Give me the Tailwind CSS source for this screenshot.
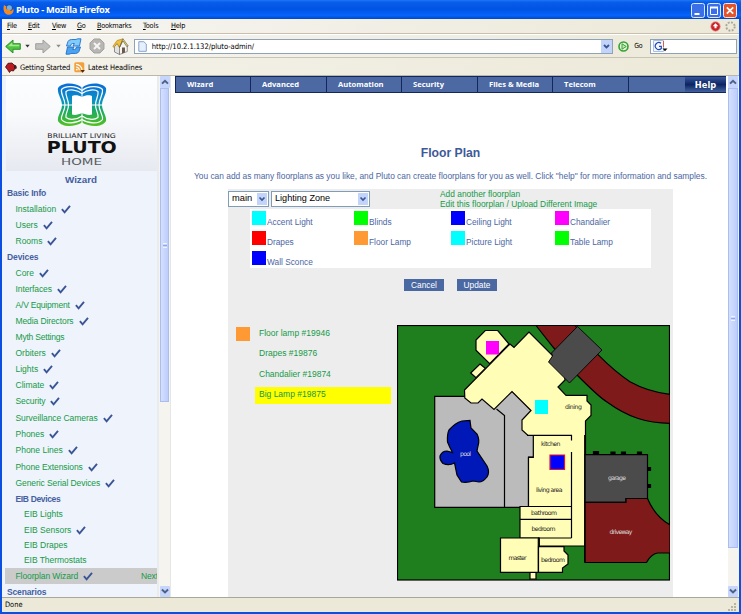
<!DOCTYPE html>
<html lang="en">
<head>
<meta charset="utf-8">
<title>Pluto - Mozilla Firefox</title>
<script src="https://cdn.jsdelivr.net/npm/@tailwindcss/browser@4"></script>
</head>
<body class="w-[741px] h-[614px] overflow-hidden">
<svg width="0" height="0" class="absolute">
  <defs>
    <symbol id="ck" viewBox="0 0 10 9"><path d="M.9 4.200 3.600 7.300 9 .9" fill="none" stroke="#3a5596" stroke-width="1.900"/></symbol>
    <symbol id="up" viewBox="0 0 8 8"><path d="M1.500 5.400 4 3l2.500 2.400" fill="none" stroke="#4d6185" stroke-width="1.600"/></symbol>
    <symbol id="dn" viewBox="0 0 8 8"><path d="M1.500 2.800 4 5.200l2.500-2.400" fill="none" stroke="#4d6185" stroke-width="1.600"/></symbol>
  </defs>
</svg>
<div class="flex flex-col w-[741px] h-[614px] bg-[#0a4fe0] font-['Liberation_Sans',sans-serif]">
  <!-- Title bar -->
  <header class="flex items-center h-[19px] pl-[3px] pr-[4px] bg-[linear-gradient(#1c78f5_0%,#0a5cea_12%,#0054e3_50%,#0563fb_82%,#0048c8_100%)]">
    <svg class="w-[11px] h-[11px]" viewBox="0 0 11 11"><circle cx="5.800" cy="5.200" r="4.600" fill="#274f9c"/><circle cx="6.300" cy="3.800" r="2.600" fill="#6fb1e8"/><path d="M1 1c1 1 1.500 1 2.500 1C2.500 3.500 3 5 4.500 5.500c1 .5 2 0 3 .5-1 1.500 1 1.500 2.800-1.500C11.500 9 8 11 5 10.700 1.500 10.400-.5 6 1 1z" fill="#f08a24"/></svg>
    <h1 class="ml-[2px] text-[9.3px] font-bold text-white leading-none font-['Open_Sans','DejaVu_Sans',sans-serif] tracking-[-0.3px] whitespace-nowrap pt-[1px]">Pluto - Mozilla Firefox</h1>
    <div class="ml-auto flex gap-[2px] mt-[1px]">
      <svg class="w-[14px] h-[15px]" viewBox="0 0 14 15"><rect x=".5" y=".5" width="13" height="14" rx="2" fill="#3a6fe8" stroke="#dce8ff"/><path d="M3.500 11h5" stroke="#fff" stroke-width="2"/></svg>
      <svg class="w-[14px] h-[15px]" viewBox="0 0 14 15"><rect x=".5" y=".5" width="13" height="14" rx="2" fill="#3a6fe8" stroke="#dce8ff"/><path d="M3.500 4.500h7v7h-7z" fill="none" stroke="#fff"/><path d="M3 4.500h8" stroke="#fff" stroke-width="2"/></svg>
      <svg class="w-[14px] h-[15px]" viewBox="0 0 14 15"><rect x=".5" y=".5" width="13" height="14" rx="2" fill="#e2542c" stroke="#ffe4dc"/><path d="M3.800 4.300l6.400 6.400m0-6.400l-6.400 6.400" stroke="#fff" stroke-width="1.700"/></svg>
    </div>
  </header>

  <div class="flex flex-col mx-[2px] h-[593px] bg-[#ece9d8]">
    <!-- Menus -->
    <nav class="flex items-center h-[15px] pl-[5px] pr-[3px] shrink-0 text-[7.3px] leading-none text-black font-['DejaVu_Sans_Condensed','DejaVu_Sans',sans-serif] bg-[linear-gradient(90deg,#f6f5f2,#ece9d8)] border-b border-[#c9bfae]">
      <span class="w-[21px] tracking-[-0.3px]"><u>F</u>ile</span><span class="w-[24px] tracking-[-0.3px]"><u>E</u>dit</span><span class="w-[25px] tracking-[-0.4px]"><u>V</u>iew</span><span class="w-[20px] tracking-[-0.4px]"><u>G</u>o</span><span class="w-[46px] tracking-[-0.25px]"><u>B</u>ookmarks</span><span class="w-[28px] tracking-[-0.1px]"><u>T</u>ools</span><span class="tracking-[-0.2px]"><u>H</u>elp</span>
      <div class="ml-auto flex gap-[4px]">
        <svg class="w-[11px] h-[11px]" viewBox="0 0 11 11"><circle cx="5.500" cy="5.500" r="4.700" fill="#c8252b" stroke="#e98b8b" stroke-width=".7"/><path d="M5.500 2.200 8.300 5.200H6.500v2h-2v-2H2.700z" fill="#fff"/></svg>
        <svg class="w-[11px] h-[11px]" viewBox="0 0 11 11"><circle cx="5.500" cy="5.500" r="4.200" fill="none" stroke="#aaa79d" stroke-width="1.900" stroke-dasharray="1.900 1.400"/></svg>
      </div>
    </nav>
    <!-- Navigation toolbar -->
    <div class="flex items-center h-[24px] shrink-0 pl-[3px] pr-[2px] border-t border-white border-b border-b-[#c6c4b4] bg-[linear-gradient(90deg,#f6f5f2,#ece9d8)]">
      <svg class="w-[16px] h-[15px]" viewBox="0 0 16 15"><path d="M.7 7.500 8 1v3.700h7.300v5.600H8V14z" fill="#4fc63f" stroke="#2b8f2c"/><path d="M3 7.200 7.300 3.500v2.200h7v1.500z" fill="#a5ea92"/></svg>
      <svg class="w-[5px] h-[4px] ml-[4px]" viewBox="0 0 5 4"><path d="M.3.800h4.400L2.500 3.500z" fill="#333"/></svg>
      <svg class="w-[16px] h-[15px] ml-[5px]" viewBox="0 0 16 15"><path d="M15.300 7.500 8 1v3.700H.7v5.600H8V14z" fill="#bfbfbd" stroke="#a09f9b"/></svg>
      <svg class="w-[5px] h-[4px] ml-[5px]" viewBox="0 0 5 4"><path d="M.3.800h4.400L2.500 3.500z" fill="#8c8b85"/></svg>
      <svg class="w-[17px] h-[17px] ml-[4px]" viewBox="0 0 17 17"><path d="M1.500 8 3 3.500Q4 1.500 6.500 1.500H11L12.500.8H16L14.500 8H8l1.300-2.500H7.500Q6 5.500 5.500 8z" fill="#7fcbfa" stroke="#1f6fcb" stroke-width=".9"/><path d="M15.500 9 14 13.500Q13 15.500 10.500 15.500H6l-1.500.7H1L2.500 9H9l-1.300 2.500h1.800Q11 11.500 11.500 9z" fill="#4ba3f0" stroke="#1f6fcb" stroke-width=".9"/></svg>
      <svg class="w-[16px] h-[16px] ml-[7px]" viewBox="0 0 16 16"><path d="M5 1h6l4 4v6l-4 4H5l-4-4V5z" fill="#b7b6b3" stroke="#a3a29e"/><path d="M5 5l6 6m0-6l-6 6" stroke="#f5f5f3" stroke-width="2"/></svg>
      <svg class="w-[17px] h-[17px] ml-[7px]" viewBox="0 0 17 17"><path d="M6 9 11 2.500l4.300 5.500v5.500L7.500 16.500z" fill="#f7f6f3" stroke="#666" stroke-width=".7"/><path d="M2.500 8.500V14l5 2.500V9L5 5.500z" fill="#e3e2de" stroke="#666" stroke-width=".7"/><path d="M.8 8.500 5 2.500 11 .8 7.500 9.500 5 5.500 2 9.300z" fill="#efc13c" stroke="#a67c16" stroke-width=".6"/><path d="M11 .8 16.300 8l-1.500.6L11 3 7.500 9.500z" fill="#f7d562" stroke="#555" stroke-width=".6"/><path d="M10 9.500h3v5l-3 1.100z" fill="#6b5a4c"/></svg>
      <div class="ml-[5px] flex items-center w-[480px] h-[15px] border border-[#8fa3b8] bg-white pl-[3px]">
        <svg class="w-[9px] h-[11px]" viewBox="0 0 9 11"><path d="M.8.700h5L8.300 3v7.300H.8z" fill="#e6effc" stroke="#7b9acb" stroke-width=".9"/></svg>
        <span class="ml-[5px] text-[7.600px] leading-none text-black font-['DejaVu_Sans_Condensed','DejaVu_Sans',sans-serif] tracking-[-0.06px] pt-[1px]">http://10.2.1.132/pluto-admin/</span>
        <svg class="ml-auto w-[11px] h-[13px] bg-[#c3d4fb]" viewBox="0 0 11 13"><path d="M3 5l2.500 2.500L8 5" fill="none" stroke="#3d5690" stroke-width="1.800"/></svg>
      </div>
      <svg class="ml-[5px] w-[11px] h-[11px]" viewBox="0 0 11 11"><circle cx="5.500" cy="5.500" r="4.500" fill="#e7f7e3" stroke="#35a22f" stroke-width="1.600"/><path d="M4 2.800 8.300 5.500 4 8.200z" fill="#bfeab6" stroke="#35a22f"/></svg>
      <span class="ml-[5px] w-[16px] text-[7px] leading-none font-['DejaVu_Sans_Condensed','DejaVu_Sans',sans-serif] tracking-[-0.2px] pt-[1px]">Go</span>
      <div class="flex items-center w-[87px] h-[15px] border border-[#8fa3b8] bg-white pl-[2px]">
        <svg class="w-[15px] h-[12px]" viewBox="0 0 15 12"><path d="M.5.500h10v11H.5z" fill="#f4f8fe" stroke="#a9c0e4"/><path d="M8 3.300A3.500 3.500 0 1 0 8.300 8.500V6.300H6" fill="none" stroke="#2449b0" stroke-width="1.200"/><path d="M10.500 1v6" stroke="#df5b4d"/><path d="M9.500 8.500h5L12 11.300z" fill="#111"/></svg>
      </div>
    </div>
    <!-- Bookmarks toolbar -->
    <div class="flex items-center h-[18px] pt-[2px] shrink-0 pl-[3px] text-[7.500px] leading-none text-black font-['DejaVu_Sans_Condensed','DejaVu_Sans',sans-serif] bg-[linear-gradient(90deg,#f4f2ea,#ece9d8)] border-b border-[#bab8aa]">
      <svg class="w-[12px] h-[11px]" viewBox="0 0 12 11"><path d="M.5 5 3 1.300 7 1l2 2 2 .8.300 2.500-2 1L8.500 9 6 8.500 4.500 10.500 2.500 7.500z" fill="#b81c22" stroke="#3c0b0c" stroke-width=".8"/><path d="M9 3l2 2-2 2" fill="#222"/></svg>
      <span class="ml-[3px] tracking-[-0.14px] w-[54px] whitespace-nowrap">Getting Started</span>
      <svg class="w-[11px] h-[11px]" viewBox="0 0 11 11"><rect x=".3" y=".3" width="10" height="10" rx="1.500" fill="#f2a13c"/><path d="M2 2.300a6 6 0 0 1 6 6M2 5a3.300 3.300 0 0 1 3.300 3.300" stroke="#fff" stroke-width="1.200" fill="none"/><circle cx="2.800" cy="7.600" r=".9" fill="#fff"/><path d="M6.500 8h4.300L8.600 10.700z" fill="#4c2c0c"/></svg>
      <span class="ml-[3px] tracking-[-0.14px]">Latest Headlines</span>
    </div>

    <!-- Page frames -->
    <div class="flex h-[521px] shrink-0 bg-white overflow-hidden">
      <aside class="w-[157px] h-[521px] bg-[#eff3fb] border-r-2 border-[#e9ecee] pl-[3px] shrink-0 overflow-hidden text-[8.500px] leading-none text-[#149a48]">
        <div class="h-[95px] w-[151px] ml-[1px] bg-[linear-gradient(#fcfdfe_0%,#f9fafc_40%,#e6e9f0_100%)] flex flex-col items-center pt-[7px]">
          <svg class="w-[50px] h-[44px]" viewBox="0 0 50 44">
            <defs><linearGradient id="lg" x1="0" y1="0" x2="0" y2="44" gradientUnits="userSpaceOnUse"><stop offset="0" stop-color="#0a6ad8"/><stop offset=".42" stop-color="#0a94c4"/><stop offset=".6" stop-color="#18a96a"/><stop offset="1" stop-color="#58c21c"/></linearGradient></defs>
            <path d="M25 4.500C18-1 5-1 1 5c-1 6 4 11 4 17S0 33 1 38c4 7 17 6 24 1.500C32 44 45 45 49 38c1-5-4-10-4-16s5-11 4-17C45-1 32-1 25 4.500z" fill="url(#lg)"/>
            <path d="M25 7.500C19 2.500 8 2.500 4.500 6.500c-1 5 3.500 9 3.500 15.500s-4.500 10-3.500 14.500c3.500 5 14.500 4 20.500 0 6 4 17 5 20.500 0C46.500 32 42 28.500 42 22s4.500-10.500 3.500-15.500C42 2.500 31 2.500 25 7.500z" fill="none" stroke="#fff" stroke-width="1.200"/>
            <path d="M25 10.500c-5-4-13-4.500-16-2-1 4 2.500 7.500 2.500 13.500S8 30.500 9 34.500c4 3 11 2 16-1.500 5 3.500 12 4.500 16 1.500 1-4-2.500-6.500-2.500-12.500S42 12.500 41 8.500c-3-2.500-11-2-16 2z" fill="none" stroke="#fff" stroke-width="1.200"/>
            <path d="M25 14c-3-2-8-2.500-10-1 0 3 0 5 0 9s0 6.500 0 9.500c3 1 7 0 10-1.500 3 1.500 7 2.500 10 1.500 0-3 0-5.500 0-9.500s0-6 0-9c-2-1.500-7-1-10 1z" fill="#fff"/>
            <path d="M25 3v12M25 29v12M2 22h16M32 22h16" stroke="#fff" stroke-width="1"/>
          </svg>
          <svg class="w-[80px] h-[38px] mt-[2px]" viewBox="0 0 80 38" font-family="'DejaVu Sans',sans-serif">
            <text x="5.300" y="8.500" font-size="6.400" fill="#222" textLength="68.500" lengthAdjust="spacingAndGlyphs">BRILLIANT LIVING</text>
            <text x="4.800" y="24.300" font-size="15" font-weight="bold" fill="#111" textLength="70" lengthAdjust="spacingAndGlyphs">PLUTO</text>
            <text x="19" y="36" font-size="9.300" fill="#585c63" textLength="41" lengthAdjust="spacingAndGlyphs">HOME</text>
          </svg>
        </div>
        <h2 class="h-[16px] flex items-center justify-center pt-[2px] text-[9.800px] font-bold text-[#4560a0]">Wizard</h2>
        <div class="h-[14px] pt-[2px] pl-[2px] font-bold text-[#4560a0] tracking-[-0.15px]">Basic Info</div>
        <ul class="[&>li]:flex [&>li]:items-center [&>li]:gap-[5px] [&>li]:whitespace-nowrap">
          <li class="h-[16px] pl-[10.500px]">Installation<svg class="w-[10px] h-[9px]"><use href="#ck"/></svg></li>
          <li class="h-[16px] pl-[10.500px]">Users<svg class="w-[10px] h-[9px]"><use href="#ck"/></svg></li>
          <li class="h-[16px] pl-[10.500px]">Rooms<svg class="w-[10px] h-[9px]"><use href="#ck"/></svg></li>
          <li class="h-[16px] pl-[2px] font-bold text-[#4560a0] tracking-[-0.1px]">Devices</li>
          <li class="h-[16px] pl-[10.500px]">Core<svg class="w-[10px] h-[9px]"><use href="#ck"/></svg></li>
          <li class="h-[16px] pl-[10.500px] tracking-[-0.1px]">Interfaces<svg class="w-[10px] h-[9px]"><use href="#ck"/></svg></li>
          <li class="h-[16px] pl-[10.500px] tracking-[-0.2px]">A/V Equipment<svg class="w-[10px] h-[9px]"><use href="#ck"/></svg></li>
          <li class="h-[17px] pl-[10.500px] tracking-[-0.1px]">Media Directors<svg class="w-[10px] h-[9px]"><use href="#ck"/></svg></li>
          <li class="h-[15px] pl-[10.500px] tracking-[-0.2px]">Myth Settings</li>
          <li class="h-[16px] pl-[10.500px]">Orbiters<svg class="w-[10px] h-[9px]"><use href="#ck"/></svg></li>
          <li class="h-[16px] pl-[10.500px]">Lights<svg class="w-[10px] h-[9px]"><use href="#ck"/></svg></li>
          <li class="h-[16px] pl-[10.500px]">Climate<svg class="w-[10px] h-[9px]"><use href="#ck"/></svg></li>
          <li class="h-[17px] pl-[10.500px] tracking-[-0.1px]">Security<svg class="w-[10px] h-[9px]"><use href="#ck"/></svg></li>
          <li class="h-[16px] pl-[10.500px] tracking-[-0.05px]">Surveillance Cameras<svg class="w-[10px] h-[9px]"><use href="#ck"/></svg></li>
          <li class="h-[16px] pl-[10.500px]">Phones<svg class="w-[10px] h-[9px]"><use href="#ck"/></svg></li>
          <li class="h-[17px] pl-[10.500px]">Phone Lines<svg class="w-[10px] h-[9px]"><use href="#ck"/></svg></li>
          <li class="h-[16px] pl-[10.500px] tracking-[-0.08px]">Phone Extensions<svg class="w-[10px] h-[9px]"><use href="#ck"/></svg></li>
          <li class="h-[16px] pl-[10.500px] tracking-[-0.08px]">Generic Serial Devices<svg class="w-[10px] h-[9px]"><use href="#ck"/></svg></li>
          <li class="h-[16px] pl-[10.500px] font-bold text-[#4560a0] tracking-[-0.35px]">EIB Devices</li>
          <li class="h-[15px] pl-[19px]">EIB Lights</li>
          <li class="h-[16px] pl-[19px]">EIB Sensors<svg class="w-[10px] h-[9px]"><use href="#ck"/></svg></li>
          <li class="h-[15px] pl-[19px]">EIB Drapes</li>
          <li class="h-[15px] pl-[19px] tracking-[-0.05px]">EIB Thermostats</li>
          <li class="h-[16px] pl-[10.500px] bg-[#cbcbcb] tracking-[-0.1px]">Floorplan Wizard<svg class="w-[10px] h-[9px]"><use href="#ck"/></svg><span class="ml-auto -mr-[1px]">Next</span></li>
          <li class="h-[16px] pl-[2px] font-bold text-[#4560a0] tracking-[-0.15px]">Scenarios</li>
        </ul>
      </aside>
      <div class="flex flex-col w-[12px] h-[521px] shrink-0 px-[1px] bg-[#f5f4ef] border-r border-[#e6e6e6]">
        <svg class="w-[10px] h-[12px] bg-[#c6d5fc] rounded-[1px]" viewBox="0 0 8 10"><use href="#up" width="8" height="8" y="1"/></svg>
        <div class="h-[314px] border border-[#a9bdf0] bg-[linear-gradient(90deg,#d5e0fe,#bdcdfb)] flex flex-col items-center justify-center gap-[1px]"><i class="w-[4px] h-px bg-[#eef4fe]"></i><i class="w-[4px] h-px bg-[#8fa9ea]"></i><i class="w-[4px] h-px bg-[#eef4fe]"></i></div>
        <svg class="mt-auto w-[10px] h-[11px] bg-[#c6d5fc] rounded-[1px]" viewBox="0 0 8 9"><use href="#dn" width="8" height="8"/></svg>
      </div>

      <main class="flex-1 pl-[4px] h-[521px]">
        <div class="w-[551px]">
          <nav class="flex h-[17px] border-y border-[#14275a] bg-[#4c69a3] text-white text-[7.600px] leading-none font-bold font-['Open_Sans','DejaVu_Sans',sans-serif] [&>a]:flex [&>a]:items-center [&>a]:pl-[11px] [&>a]:border-r [&>a]:border-[#14275a] [&>a]:whitespace-nowrap">
            <a class="w-[76px] border-l">Wizard</a><a class="w-[76px]">Advanced</a><a class="w-[75px]">Automation</a><a class="w-[76px]">Security</a><a class="w-[75px]">Files &amp; Media</a><a class="w-[76px]">Telecom</a>
            <span class="ml-auto w-[41px] flex items-center justify-center text-[9.200px] font-['DejaVu_Sans_Condensed','DejaVu_Sans',sans-serif] bg-[linear-gradient(#36549a,#0c2461_50%,#4462a0)]">Help</span>
          </nav>
          <h2 class="pt-[53px] h-[71px] text-center text-[12.200px] leading-[14px] font-bold text-[#3e5a99]">Floor Plan</h2>
          <p class="h-[25px] pt-[7px] text-center text-[8.380px] leading-[10px] text-[#4c66a3] whitespace-nowrap">You can add as many floorplans as you like, and Pluto can create floorplans for you as well. Click "help" for more information and samples.</p>
          <section class="ml-[53px] w-[445px] h-[410px] bg-[#ededed]">
            <div class="flex h-[20px] pt-[2px]">
              <div class="flex items-center w-[41px] h-[16px] border border-[#7f9db9] bg-white pl-[3px] pr-px text-[9.300px] leading-none text-black">main<svg class="ml-auto w-[10px] h-[12px] bg-[#c3d4fb]" viewBox="0 0 10 12"><path d="M2.500 4.500 5 7l2.500-2.500" fill="none" stroke="#3d5690" stroke-width="1.700"/></svg></div>
              <div class="flex items-center ml-[2px] w-[99px] h-[16px] border border-[#7f9db9] bg-white pl-[3px] pr-px text-[9.100px] leading-none text-black">Lighting Zone<svg class="ml-auto w-[10px] h-[12px] bg-[#c3d4fb]" viewBox="0 0 10 12"><path d="M2.500 4.500 5 7l2.500-2.500" fill="none" stroke="#3d5690" stroke-width="1.700"/></svg></div>
              <div class="ml-[70px] -mt-[2px] text-[8.400px] leading-[10px] text-[#149a48] whitespace-nowrap">Add another floorplan<br>Edit this floorplan / Upload Different Image</div>
            </div>
            <div class="ml-[22px] w-[401px] h-[59px] bg-white grid grid-cols-[102px_97px_104px_97px] auto-rows-[20px] pt-[2px] pl-[2px] text-[8.300px] leading-none text-[#4c66a3] [&>div]:flex [&>div]:gap-[1px] [&>div>span]:pt-[7px] [&>div>span]:whitespace-nowrap [&>div>i]:w-[14px] [&>div>i]:h-[14px]">
              <div><i class="bg-[#00ffff]"></i><span>Accent Light</span></div>
              <div><i class="bg-[#00ff00]"></i><span>Blinds</span></div>
              <div><i class="bg-[#0000ff]"></i><span>Ceiling Light</span></div>
              <div><i class="bg-[#ff00ff]"></i><span>Chandalier</span></div>
              <div><i class="bg-[#ff0000]"></i><span>Drapes</span></div>
              <div><i class="bg-[#ff9933]"></i><span>Floor Lamp</span></div>
              <div><i class="bg-[#00ffff]"></i><span>Picture Light</span></div>
              <div><i class="bg-[#00ff00]"></i><span>Table Lamp</span></div>
              <div><i class="bg-[#0000ff]"></i><span>Wall Sconce</span></div>
            </div>
            <div class="flex gap-[13px] ml-[176px] mt-[11px] text-[8.300px] leading-none text-white">
              <span class="w-[40px] h-[12px] bg-[#4a68a2] flex items-center justify-center">Cancel</span>
              <span class="w-[40px] h-[12px] bg-[#4a68a2] flex items-center justify-center">Update</span>
            </div>
            <div class="flex mt-[34px]">
              <i class="ml-[8px] mt-[2px] w-[14px] h-[14px] bg-[#ff9933]"></i>
              <ul class="ml-[5px] w-[136px] text-[8.500px] leading-none text-[#149a48] [&>li]:pl-[4px]">
                <li class="h-[20px] pt-[4px]">Floor lamp #19946</li>
                <li class="h-[21px] pt-[4px]">Drapes #19876</li>
                <li class="h-[21px] pt-[4px]">Chandalier #19874</li>
                <li class="h-[17px] pt-[3px] bg-[#ffff00]">Big Lamp #19875</li>
              </ul>
              <svg class="ml-[6px] w-[273px] h-[256px] shrink-0" viewBox="397 325 273 256" stroke="#000" stroke-width="1.200" fill="none">
                <rect x="397.500" y="325.500" width="272" height="254.500" fill="#1f7f1f"/>
                <path d="M536 325.500 553 347l24.500 28.500C592 390 600 398 607 402c22 16 40 21 63 21.300V394.300c-17-2-30-7-40-12.600-11-7-21-16-32-27L575 325.500z" fill="#7f1a1a"/>
                <path d="M434.700 396.300H506L512 391l22 22v44h-5.500v50.300H434.700z" fill="#bbb"/>
                <path d="M496.500 409 504.500 415.500v92"/>
                <path d="M464.500 390 510 344l4 3.500L529 332l34 34 2 14-7 7 8 8.300h21v5.700l4 4v10.500l-5.500 5.500v125h-46.200V538H520V506.500h8.500V457.300h4.800V435.500H528L522 430V420l9-9.500L512 391.500 494 409.500 482 399l-4 4h-7l-6.200-5z" fill="#fffdb6"/>
                <path d="M485.300 330.500h12.400L509 344 489.700 363.700 476 350.300V340z" fill="#fffdb6"/>
                <path d="M480 364l5.300 4.300-9.300 9.400-5.300-4.700z" fill="#fffdb6"/>
                <path d="M577.500 326.500 602 350 569.500 383 548.500 362l4-6-1-3z" fill="#4b4b4b" stroke-width=".9"/>
                <path d="M470 420.500 471 428 477 434Q480 440 478 446L477 451 487 466Q490 472 487 477 483 482 479 482L473 481Q467 483 461.500 482L457 475 454.500 463Q449 466 443 463.500 439.500 460 440 456 442 451 447 451L452.500 452.500Q449.500 447 447.500 442 447 434 449 430 455 423 462 421z" fill="#0018b8"/>
                <path d="M527 435.400h44.500v5M571.500 452v86M520 506.500h51.500M520 519.300h51.500M538 538h33.500"/>
                <path d="M500.500 538h37.800v34.300h-37.800z" fill="#fffdb6"/>
                <path d="M538.500 546.700H564v4.300l4 4v9l-5.500 4v4.300h-24z" fill="#fffdb6"/>
                <path d="M530 572.500h6v6.700h-6z" fill="#fffdb6"/>
                <path d="M585 454.700h62.500v44H626v3.600h-41z" fill="#4b4b4b"/>
                <path d="M593.500 451.500h5v3h-5zM611 452h4v2h-4zM621.500 452h4v2h-4zM637.500 452h4v2h-4zM648 467.500h2.500v3H648zM648 484.500h2.500v3H648z" fill="#000"/>
                <path d="M585 502.300h41v-3.800h21.500c5 12 13 21 22.500 26.500v28h-12.500c-5 1-8 4-11 9.500H585z" fill="#7f1a1a"/>
                <path d="M584.700 435v127.500"/>
                <g stroke="none" font-family="'DejaVu Sans',sans-serif" font-size="6.200" fill="#222">
                  <text x="565" y="408.500" textLength="17">dining</text>
                  <text x="541" y="446" textLength="19.500">kitchen</text>
                  <text x="536" y="491.500" textLength="26.500">living area</text>
                  <text x="531" y="514.500" textLength="26">bathroom</text>
                  <text x="531.500" y="531" textLength="24">bedroom</text>
                  <text x="508.500" y="559.500" textLength="18">master</text>
                  <text x="541" y="562" textLength="24">bedroom</text>
                  <g fill="#ddd"><text x="460" y="456" textLength="11">pool</text><text x="608" y="479.500" textLength="18">garage</text><text x="609.500" y="534" textLength="23">driveway</text></g>
                </g>
                <g stroke="none"><path d="M486 341h13v13.500h-13z" fill="#f0f"/><path d="M535 400h13v14h-13z" fill="#0ff"/></g>
                <path d="M550 455h14.500v14.500H550z" fill="#00f" stroke="#e8102c"/>
              </svg>
            </div>
          </section>
        </div>
      </main>
      <div class="flex flex-col w-[11px] h-[521px] shrink-0 pr-px bg-[#f5f4ef]">
        <svg class="w-[10px] h-[12px] bg-[#c6d5fc] rounded-[1px]" viewBox="0 0 8 10"><use href="#up" width="8" height="8" y="1"/></svg>
        <div class="h-[460px] border border-[#a9bdf0] bg-[linear-gradient(90deg,#d5e0fe,#bdcdfb)] flex flex-col items-center justify-center gap-[1px]"><i class="w-[4px] h-px bg-[#eef4fe]"></i><i class="w-[4px] h-px bg-[#8fa9ea]"></i><i class="w-[4px] h-px bg-[#eef4fe]"></i></div>
        <svg class="mt-auto w-[10px] h-[11px] bg-[#c6d5fc] rounded-[1px]" viewBox="0 0 8 9"><use href="#dn" width="8" height="8"/></svg>
      </div>
    </div>
    <!-- Status bar -->
    <footer class="flex items-center flex-1 pl-[3px] pr-[2px] border-t border-[#a9a798] text-[7.400px] leading-none font-['DejaVu_Sans_Condensed','DejaVu_Sans',sans-serif]">Done
      <svg class="ml-auto w-[10px] h-[10px] self-end" viewBox="0 0 10 10"><path d="M7 1h2v2H7zM7 4h2v2H7zM7 7h2v2H7zM4 4h2v2H4zM4 7h2v2H4zM1 7h2v2H1z" fill="#b8b4a2"/></svg>
    </footer>
  </div>
</div>
</body>
</html>
